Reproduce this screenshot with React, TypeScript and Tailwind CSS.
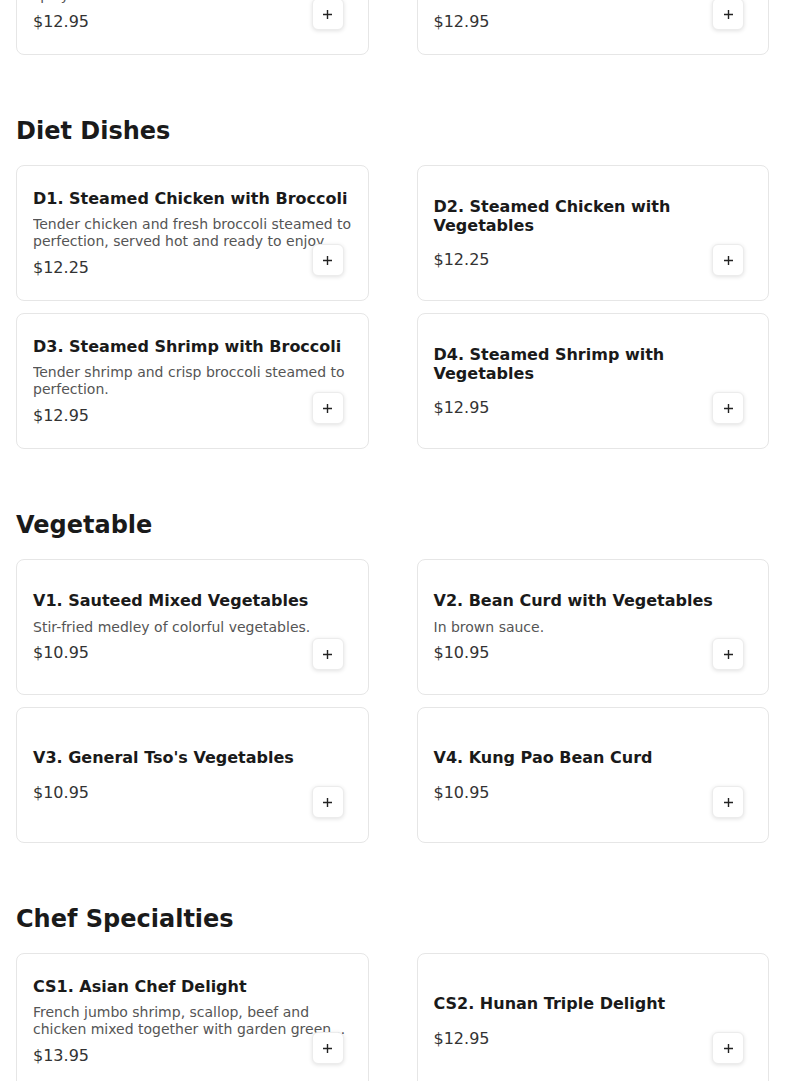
import React from "react";

type Item = { title: string; desc?: React.ReactNode; price: string };

const sections: { name?: string; items: Item[] }[] = [
  {
    items: [
      {
        title: "S7. Shrimp with Garlic Sauce",
        desc: (
          <>
            Jumbo shrimp with fresh vegetables in a spicy
            <br />
            sauce.
          </>
        ),
        price: "$12.95",
      },
      {
        title: "S8. Shrimp with Lobster Sauce",
        desc: (
          <>
            Tender shrimp sauteed in a rich white lobster
            <br />
            sauce.
          </>
        ),
        price: "$12.95",
      },
    ],
  },
  {
    name: "Diet Dishes",
    items: [
      {
        title: "D1. Steamed Chicken with Broccoli",
        desc: "Tender chicken and fresh broccoli steamed to perfection, served hot and ready to enjoy.",
        price: "$12.25",
      },
      { title: "D2. Steamed Chicken with Vegetables", price: "$12.25" },
      {
        title: "D3. Steamed Shrimp with Broccoli",
        desc: "Tender shrimp and crisp broccoli steamed to perfection.",
        price: "$12.95",
      },
      { title: "D4. Steamed Shrimp with Vegetables", price: "$12.95" },
    ],
  },
  {
    name: "Vegetable",
    items: [
      {
        title: "V1. Sauteed Mixed Vegetables",
        desc: "Stir-fried medley of colorful vegetables.",
        price: "$10.95",
      },
      { title: "V2. Bean Curd with Vegetables", desc: "In brown sauce.", price: "$10.95" },
      { title: "V3. General Tso's Vegetables", price: "$10.95" },
      { title: "V4. Kung Pao Bean Curd", price: "$10.95" },
    ],
  },
  {
    name: "Chef Specialties",
    items: [
      {
        title: "CS1. Asian Chef Delight",
        desc: "French jumbo shrimp, scallop, beef and chicken mixed together with garden green vegetables in a special sauce.",
        price: "$13.95",
      },
      { title: "CS2. Hunan Triple Delight", price: "$12.95" },
    ],
  },
];

function Card({ item }: { item: Item }) {
  return (
    <div className="relative flex h-[136px] flex-col justify-center rounded-lg border border-[#e6e6e6] bg-white p-4">
      <div
        className={`text-[16px] font-bold leading-[1.2] text-[#1a1a1a] ${
          item.desc ? "mb-2" : "mb-[15px]"
        }`}
      >
        {item.title}
      </div>
      {item.desc && (
        <div className="mb-2 line-clamp-2 text-[14px] leading-[1.2] text-[#555555]">
          {item.desc}
        </div>
      )}
      <div className="text-[16px] leading-[1.2] text-[#333333]">{item.price}</div>
      <button className="absolute bottom-6 right-6 flex h-8 w-8 items-center justify-center rounded-md border border-[#ececec] bg-white text-[#222] shadow-[0_1px_4px_rgba(0,0,0,0.12)]">
        <svg width="11" height="11" viewBox="0 0 11 11" fill="none">
          <path d="M5.5 1v9M1 5.5h9" stroke="#222" strokeWidth="1.4" />
        </svg>
      </button>
    </div>
  );
}

export default function App() {
  return (
    <div
      className="min-h-screen overflow-hidden bg-white px-4 pb-10"
      style={{ fontFamily: '"DejaVu Sans", sans-serif' }}
    >
      <div className="-mt-[81px] flex flex-col gap-[60px]">
        {sections.map((s, i) => (
          <section key={i}>
            {s.name && (
              <h2 className="mb-[18px] text-[24px] font-bold leading-[32px] text-[#1a1a1a]">
                {s.name}
              </h2>
            )}
            <div className="grid grid-cols-2 gap-x-12 gap-y-3">
              {s.items.map((it) => (
                <Card key={it.title} item={it} />
              ))}
            </div>
          </section>
        ))}
      </div>
    </div>
  );
}
